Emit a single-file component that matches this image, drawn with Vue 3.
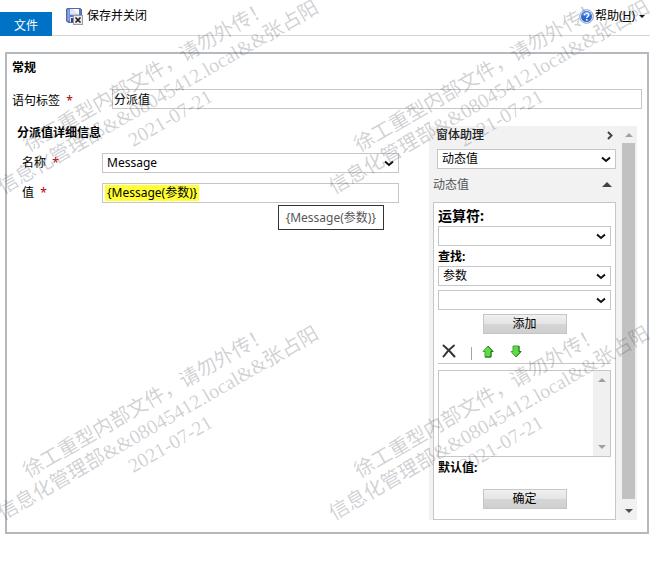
<script setup>
import { ref } from 'vue'

const label = ref('分派值')
const name = ref('Message')
const value = ref('{Message(参数)}')
const assistant = ref('动态值')
const lookup = ref('参数')
const marks = [1, 2, 3, 4]
</script>

<template>
  <div class="page">
    <header class="ribbon">
      <button class="file-tab" type="button">文件</button>
      <button class="tool save" type="button">
        <svg width="17" height="17" viewBox="0 0 17 17" aria-hidden="true">
          <path d="M1 .5h13.5l1 1V14.500H2L.5 13V1z" fill="#5b78c4" stroke="#5467b0" />
          <path d="M1.500 1.500h2v11h-2z" fill="#8fa9e6" />
          <rect x="4" y="1" width="9" height="6" fill="#dfe6f6" />
          <path d="M7 1h6v5z" fill="#fff" />
          <path d="M4 6.500h9" stroke="#b9c4e2" />
          <rect x="4" y="9" width="5" height="5" fill="#e4e8f2" />
          <rect x="5" y="10" width="2" height="4" fill="#34417c" />
          <rect x="7.500" y="7.500" width="9" height="9" fill="#e9e9e9" stroke="#9a9ca1" />
          <path d="M9.500 9.500l5 5M14.500 9.500l-5 5" stroke="#1c1c1c" stroke-width="1.600" />
        </svg>
        <span>保存并关闭</span>
      </button>
      <button class="tool help" type="button">
        <svg width="15" height="15" viewBox="0 0 15 15" aria-hidden="true">
          <circle cx="7.500" cy="7.500" r="6.800" fill="#e6edf8" stroke="#86a2d4" />
          <circle cx="7.500" cy="7.500" r="5.500" fill="#2b68d4" />
          <path d="M3 6a4.600 4.600 0 0 1 9 0q-4.500 2-9 0z" fill="#5d93ec" />
          <path d="M5.500 6.200c0-2.700 4.200-2.600 4.200-.2 0 1.500-2 1.500-2 3" fill="none" stroke="#fff" stroke-width="1.500" />
          <rect x="7" y="10" width="1.600" height="1.600" fill="#fff" />
        </svg>
        <span>帮助(<u>H</u>)</span>
        <svg class="caret" width="6" height="3" viewBox="0 0 6 3" aria-hidden="true"><path d="M0 0h6L3 3z" fill="#111" /></svg>
      </button>
    </header>

    <main class="panel">
      <h1>常规</h1>
      <div class="field top-field">
        <label for="stmt">语句标签 <i>*</i></label>
        <input id="stmt" v-model="label" class="box" type="text" />
      </div>

      <div class="columns">
        <section class="details">
          <h2>分派值详细信息</h2>
          <div class="field">
            <label for="name">名称 <i>*</i></label>
            <span class="select">
              <select id="name" v-model="name"><option>Message</option></select>
              <svg width="10" height="7" viewBox="0 0 10 7" aria-hidden="true"><path d="M1 1.500l4 3.500 4-3.500" /></svg>
            </span>
          </div>
          <div class="field value-field">
            <label for="value">值 <i>*</i></label>
            <span class="box slug-box"><input id="value" v-model="value" class="slug" type="text" /></span>
            <span class="tip" role="tooltip">{Message(参数)}</span>
          </div>
        </section>

        <aside class="assistant">
          <div class="assistant-body">
            <div class="head">
              <h3>窗体助理</h3>
              <svg width="6" height="9" viewBox="0 0 6 9" aria-hidden="true"><path d="M1 1l3.500 3.500L1 8" fill="none" stroke="#444" stroke-width="2" /></svg>
            </div>
            <span class="select outer">
              <select v-model="assistant" aria-label="窗体助理"><option>动态值</option></select>
              <svg width="10" height="7" viewBox="0 0 10 7" aria-hidden="true"><path d="M1 1.500l4 3.500 4-3.500" /></svg>
            </span>
            <div class="group">
              <span>动态值</span>
              <svg width="10" height="5" viewBox="0 0 10 5" aria-hidden="true"><path d="M5 0l5 5H0z" fill="#444" /></svg>
            </div>
            <div class="card">
              <label class="big" for="op">运算符:</label>
              <span class="select">
                <select id="op"><option></option></select>
                <svg width="10" height="7" viewBox="0 0 10 7" aria-hidden="true"><path d="M1 1.500l4 3.500 4-3.500" /></svg>
              </span>
              <label class="small" for="find">查找:</label>
              <span class="select">
                <select id="find" v-model="lookup"><option>参数</option></select>
                <svg width="10" height="7" viewBox="0 0 10 7" aria-hidden="true"><path d="M1 1.500l4 3.500 4-3.500" /></svg>
              </span>
              <span class="select second">
                <select aria-label="查找"><option></option></select>
                <svg width="10" height="7" viewBox="0 0 10 7" aria-hidden="true"><path d="M1 1.500l4 3.500 4-3.500" /></svg>
              </span>
              <button class="push" type="button">添加</button>
              <div class="tools">
                <button type="button">
                  <svg width="14" height="14" viewBox="0 0 14 14" aria-hidden="true">
                    <path d="M1.500 1.500Q7 6 12.500 12.500M12 1.500Q6 6 1.500 12.500" fill="none" stroke="#333" stroke-width="2" stroke-linecap="round" />
                  </svg>
                </button>
                <span class="divider"></span>
                <button type="button">
                  <svg width="12" height="13" viewBox="0 0 12 13" aria-hidden="true"><path d="M6 1l5 5.500H9V12H3V6.500H1z" fill="#62d944" stroke="#3da53a" /><path d="M6 1l5 5.500H9V12H3" fill="none" stroke="#1b7a1b" /></svg>
                </button>
                <button type="button">
                  <svg width="12" height="13" viewBox="0 0 12 13" aria-hidden="true"><path d="M6 12l5-5.500H9V1H3v5.500H1z" fill="#62d944" stroke="#3da53a" /><path d="M9 1v5.500h2L6 12" fill="none" stroke="#1b7a1b" /></svg>
                </button>
              </div>
              <div class="list">
                <select multiple aria-label="动态值"></select>
                <div class="list-bar">
                  <svg width="8" height="4" viewBox="0 0 8 4" aria-hidden="true"><path d="M4 0l4 4H0z" fill="#a0a0a0" /></svg>
                  <svg width="8" height="4" viewBox="0 0 8 4" aria-hidden="true"><path d="M0 0h8L4 4z" fill="#a0a0a0" /></svg>
                </div>
              </div>
              <p class="small">默认值:</p>
              <button class="push confirm" type="button">确定</button>
            </div>
          </div>
          <div class="scroll">
            <svg width="8" height="4" viewBox="0 0 8 4" aria-hidden="true"><path d="M4 0l4 4H0z" fill="#a3a3a3" /></svg>
            <div class="thumb"></div>
            <svg width="8" height="4" viewBox="0 0 8 4" aria-hidden="true"><path d="M0 0h8L4 4z" fill="#505050" /></svg>
          </div>
        </aside>
      </div>
    </main>

    <div class="watermark" aria-hidden="true">
      <div class="tiles">
        <div v-for="m in marks" :key="m" class="tile">
          <p>徐工重型内部文件，请勿外传！<br />信息化管理部&amp;&amp;08045412.local&amp;&amp;张占阳<br />2021-07-21</p>
        </div>
      </div>
    </div>
  </div>
</template>

<style>
body {
  margin: 0;
  background: #fff;
}
</style>

<style scoped>
.page {
  position: relative;
  min-height: 100vh;
  overflow: hidden;
  color: #000;
  font: 12px/18px "Noto Sans", "Noto Sans CJK SC", sans-serif;
}
.page * {
  box-sizing: border-box;
}
button,
input,
select {
  margin: 0;
  padding: 0;
  border: 0;
  border-radius: 0;
  background: none;
  color: inherit;
  font: inherit;
}
h1,
h2,
h3,
p {
  margin: 0;
  font-size: 12px;
}
svg {
  display: block;
  flex: none;
}
.ribbon {
  display: flex;
  align-items: flex-start;
  height: 36px;
  border-bottom: 1px solid #d6d6d6;
}
.file-tab {
  width: 52px;
  height: 24px;
  margin-top: 12px;
  padding-top: 4px;
  background: #0072c6;
  color: #fff;
}
.tool {
  display: flex;
  align-items: center;
  margin-top: 7px;
}
.save {
  gap: 4px;
  margin-left: 14px;
}
.help {
  gap: 1px;
  margin-left: auto;
  padding-right: 5px;
}
.caret {
  margin-left: 3px;
}
.panel {
  margin: 16px 1px 0 5px;
  padding: 5px 5px 12px;
  border: 2px solid #b3b9bf;
}
.field {
  display: flex;
  align-items: center;
}
.field label {
  flex: none;
  width: 80px;
}
.field i {
  margin-left: 3px;
  color: #b00000;
  font-style: normal;
}
.top-field {
  margin-top: 11px;
}
.top-field label {
  width: 100px;
  padding-top: 4px;
}
.box {
  flex: 1;
  min-width: 0;
  height: 20px;
  padding: 0 1px;
  border: 1px solid #c6c6c6;
}
.columns {
  display: flex;
  align-items: flex-start;
  gap: 30px;
  margin-top: 16px;
  padding-right: 5px;
}
.details {
  flex: 1;
  min-width: 0;
  padding-left: 5px;
}
.details h2 {
  margin: -2px 0 11px;
}
.details .field {
  padding-left: 5px;
}
.value-field {
  position: relative;
  margin-top: 10px;
}
.slug-box {
  display: flex;
  align-items: center;
  padding: 0 2px;
}
.slug {
  field-sizing: content;
  height: 16px;
  padding: 0 2px;
  background: #ffff33;
  line-height: 16px;
}
.tip {
  position: absolute;
  top: 22px;
  right: 15px;
  padding: 3px 7px;
  border: 1px solid #333;
  background: #fff;
  color: #575757;
  line-height: 17px;
}
.select {
  display: grid;
  flex: 1;
  align-items: center;
  height: 20px;
  border: 1px solid #c6c6c6;
  background: #fff;
}
.select select {
  grid-area: 1 / 1;
  width: 100%;
  height: 18px;
  padding: 0 4px;
  appearance: none;
}
.select svg {
  grid-area: 1 / 1;
  justify-self: end;
  margin-right: 4px;
  pointer-events: none;
}
.select path {
  fill: none;
  stroke: #111;
  stroke-width: 2;
}
.assistant {
  display: flex;
  flex: none;
  width: 208px;
  background: #f2f2f2;
}
.assistant-body {
  flex: 1;
  padding: 0 4px;
}
.head {
  display: flex;
  align-items: center;
  justify-content: space-between;
  margin-bottom: 5px;
  padding: 0 3px;
}
.head h3 {
  color: #222;
  font-weight: 500;
}
.outer {
  margin-left: 4px;
}
.group {
  display: flex;
  align-items: center;
  justify-content: space-between;
  height: 33px;
  padding: 0 4px 2px 0;
  color: #555;
}
.card {
  padding: 3px 4px 10px;
  border: 1px solid #c6c6c6;
  background: #fff;
}
.card label,
.card .small {
  display: block;
  font-weight: bold;
}
.card .big {
  height: 20px;
  font-size: 14px;
  line-height: 20px;
}
.card .small {
  height: 20px;
  padding-top: 2px;
}
.second {
  margin-top: 4px;
}
.push {
  display: block;
  width: 84px;
  height: 20px;
  margin: 4px auto 0;
  border: 1px solid #c6c6c6;
  background: linear-gradient(#f0f0f0, #e4e4e4 50%, #d6d6d6 50%, #cfcfcf);
}
.confirm {
  margin-top: 12px;
}
.tools {
  display: flex;
  align-items: center;
  height: 30px;
  margin-bottom: 6px;
  padding: 5px 4px 0;
  border-bottom: 1px solid #c6c6c6;
}
.divider {
  width: 1px;
  height: 13px;
  margin: 5px 10px 0 15px;
  background: #a0a6ad;
}
.tools button + button {
  margin-left: 16px;
}
.list {
  display: flex;
  height: 87px;
  border: 1px solid #c6c6c6;
}
.list select {
  flex: 1;
  min-width: 0;
  height: 100%;
}
.list-bar {
  display: flex;
  flex-direction: column;
  align-items: center;
  justify-content: space-between;
  width: 17px;
  padding: 7px 0;
  background: #f0f0f0;
}
.scroll {
  display: flex;
  flex-direction: column;
  align-items: center;
  gap: 6px;
  width: 17px;
  padding: 7px 0;
  background: #f1f1f1;
}
.thumb {
  flex: 1;
  width: 13px;
  margin-bottom: 4px;
  background: #c1c1c1;
}
.watermark {
  position: absolute;
  inset: 0;
  overflow: hidden;
  pointer-events: none;
}
.tiles {
  display: grid;
  grid-template-columns: repeat(2, 331px);
  grid-auto-rows: 326px;
  margin: -66px 0 0 -25px;
}
.tile {
  display: grid;
  place-items: center;
}
.tile p {
  color: rgba(70, 75, 85, 0.26);
  font: 400 20px/24px "Liberation Serif", "Noto Sans CJK SC", serif;
  text-align: center;
  white-space: nowrap;
  transform: rotate(-30deg);
}
</style>
